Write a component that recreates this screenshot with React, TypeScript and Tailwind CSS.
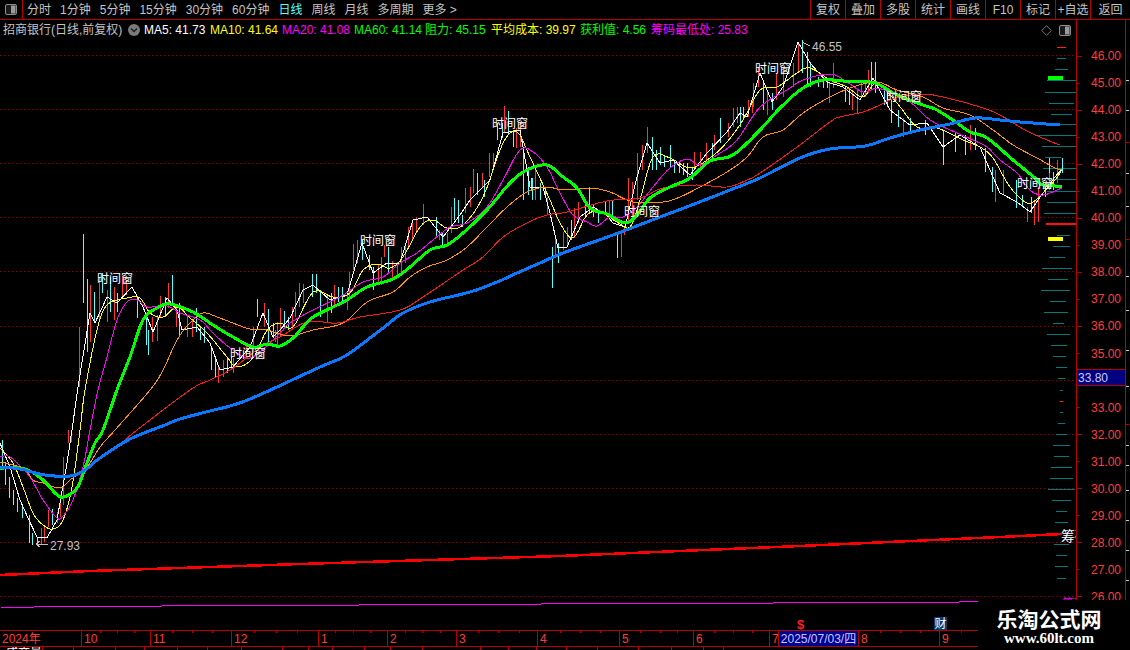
const ma5 = "0,443 10,467 20,500 28,518 37,537 47,538 57,520 67,463 72,430 78,387 90,313 95,323 107,297 117,303 132,287 143,307 153,332 167,298 177,310 182,330 197,327 210,343 220,370 233,367 250,347 263,313 273,337 280,330 290,318 303,290 313,285 330,300 347,295 362,243 373,273 387,263 400,263 413,220 427,217 443,237 460,215 470,200 490,180 503,133 520,130 530,187 543,187 550,213 558,248 567,247 580,217 593,207 607,215 613,223 625,227 637,177 647,143 660,163 673,160 690,175 707,153 727,132 740,113 747,117 760,73 772,102 783,87 798,42 810,63 827,82 843,87 860,100 873,78 890,110 910,125 927,123 943,147 960,135 980,147 990,170 1000,193 1017,202 1030,212 1038,200 1055,177 1062,169";
const ma10 = "0,448 13,463 23,487 33,513 43,525 53,529 63,520 72,487 80,430 85,390 97,330 107,305 127,298 140,298 150,313 163,317 177,307 190,318 207,333 227,357 237,367 253,358 267,330 280,323 293,327 313,292 333,297 350,293 363,270 377,264 390,268 403,257 420,227 433,220 447,228 463,225 483,197 503,143 517,132 530,157 550,200 560,223 573,238 587,215 600,212 617,222 630,227 640,200 653,157 670,158 690,168 710,158 727,142 743,120 760,90 777,87 797,73 810,68 830,80 847,87 863,97 877,83 897,103 917,127 937,128 963,140 980,147 993,158 1010,187 1027,203 1038,198 1055,180 1062,169";
const ma20 = "0,457 8,456 17,463 30,477 43,500 57,518 63,516 73,500 83,467 90,430 98,390 107,357 117,320 127,302 137,300 147,307 167,306 180,313 200,320 213,333 230,348 247,358 260,352 280,333 290,323 313,310 340,297 363,282 383,277 400,263 417,253 433,240 450,227 467,223 487,207 503,180 520,150 533,152 547,167 560,193 573,215 587,222 597,226 610,217 623,217 637,207 653,187 670,168 687,159 700,165 717,155 737,140 760,107 787,90 803,80 830,74 847,82 863,92 877,88 890,93 910,102 930,120 957,133 973,140 987,147 1000,160 1017,173 1030,190 1043,195 1062,188";
const ma60 = "0,468 25,469 43,480 55,493 63,497 77,488 87,463 95,443 103,430 118,387 130,357 143,320 157,308 170,304 193,312 213,325 233,337 253,347 267,344 280,346 293,338 303,327 313,317 333,307 347,300 367,287 393,279 410,267 430,250 447,245 463,233 487,210 510,183 527,170 547,165 563,177 577,188 590,208 607,214 625,223 637,215 650,198 670,187 690,178 710,161 733,155 760,130 780,108 803,88 823,80 843,81 870,82 880,85 897,95 923,105 937,110 957,123 970,132 987,138 1013,160 1035,178 1043,185 1062,186";
const maOrange = "0,462 13,465 25,469 33,480 43,483 60,488 70,480 87,467 100,447 115,430 150,390 163,370 177,340 190,323 203,313 217,317 233,323 250,329 267,330 290,336 313,330 343,323 367,302 393,292 410,277 427,267 447,260 467,247 487,227 507,207 527,192 547,187 563,190 590,188 610,192 633,202 663,202 680,197 700,187 727,172 747,157 763,137 783,130 803,113 830,97 853,87 877,82 897,90 923,97 943,108 970,115 993,130 1013,145 1037,158 1055,168 1062,169";
const maRed = "50,475 57,477 80,473 100,457 117,447 137,430 190,390 210,380 230,370 253,353 267,343 280,337 307,322 337,323 360,317 400,310 423,297 460,272 483,257 503,237 527,223 547,215 567,212 607,201 640,198 663,188 697,185 727,187 747,180 760,173 793,150 830,122 840,117 863,112 880,105 895,98 923,94 947,98 980,107 1000,115 1025,130 1047,140 1060,145";
const maBlue = "0,467 20,469 45,475 70,476 85,470 100,458 130,439 165,425 180,419 210,411 230,406 250,399 277,387 320,367 345,356 370,338 387,325 403,313 430,302 470,292 497,282 517,273 540,263 563,253 613,235 647,222 697,203 730,190 760,178 800,158 830,149 865,146 890,138 920,130 950,124 975,118 1000,120 1020,122 1060,125";

const cyanSticks = "83,234,303 87,279,352 94,292,323 102,273,293 110,277,312 117,293,312 137,298,318 146,313,345 148,330,355 165,297,317 172,275,305 179,303,337 196,308,332 200,327,340 204,327,343 211,347,370 215,357,377 227,357,373 231,357,370 257,299,317 268,309,345 2,440,467 5,462,485 9,477,498 13,490,505 17,498,512 22,507,518 29,515,543 32,533,545 37,537,545 52,509,525 273,323,338 284,311,328 288,317,330 312,274,297 316,274,293 320,290,317 331,293,313 338,287,302 342,287,303 362,240,260 369,255,270 373,267,290 388,247,273 436,217,237 442,232,247 454,198,220 458,200,223 462,215,227 477,173,195 484,180,197 497,123,140 502,123,138 508,111,135 513,130,147 523,148,200 528,167,195 532,178,200 540,183,200 545,187,198 552,247,288 558,243,263 531,178,190 571,220,240 585,203,217 589,188,213 593,205,217 598,213,223 605,202,215 612,200,215 617,232,258 652,137,170 656,150,170 660,147,165 664,155,167 670,145,167 674,160,173 679,162,173 683,163,175 687,163,177 692,167,180 712,143,160 720,118,143 737,107,122 743,107,120 740,107,127 763,82,110 772,93,110 802,40,73 807,52,85 810,62,87 818,77,87 823,77,88 827,78,88 845,87,102 849,88,105 871,62,90 875,62,93 884,87,105 887,88,107 891,100,123 898,110,127 910,118,133 925,120,135 943,130,165 955,132,152 965,135,155 975,128,150 985,148,172 992,167,192 1016,180,208 1022,195,207 1031,197,213 1045,185,197 1049,158,173 1053,172,190 1062,158,173";
const redSticks = "79,327,387 90,285,342 99,277,320 107,290,322 114,287,320 122,277,297 126,280,295 152,317,342 157,315,341 160,296,317 168,283,308 176,307,327 187,315,337 192,320,337 218,365,383 223,360,377 233,358,373 246,343,355 253,327,353 264,303,327 275,330,342 277,322,348 41,528,545 44,527,542 48,510,527 57,512,523 60,502,517 63,457,505 68,430,443 71,430,442 280,308,337 292,307,327 295,292,317 299,283,307 303,284,303 327,295,322 334,285,308 347,293,310 349,272,297 353,244,270 357,240,263 378,265,283 381,257,285 384,245,257 392,261,278 397,262,277 401,247,272 405,243,263 408,227,247 412,220,240 416,217,233 423,204,225 439,230,240 447,233,247 451,207,233 465,188,213 470,187,207 473,169,193 482,173,187 489,153,177 493,153,167 504,106,133 516,128,148 520,123,147 535,168,200 547,197,215 555,235,258 563,232,250 567,227,247 574,208,238 578,202,223 609,200,220 621,232,257 624,227,235 628,178,223 632,182,220 637,153,200 642,145,170 647,127,153 694,152,170 700,152,167 706,143,163 714,135,150 728,123,137 733,108,127 737,107,123 748,100,117 752,100,113 753,83,107 758,67,87 767,90,115 776,73,100 783,70,97 793,63,87 798,43,73 829,83,103 833,63,88 852,90,110 857,90,113 861,82,98 865,82,97 868,70,93 903,118,137 970,125,150 995,170,202 1003,170,195 1027,207,222 1034,200,225 1038,187,222 1049,173,190 1057,160,183";

const chipBars: [number, number, number][] = [
  [58, 1057, 1066], [69, 1055, 1068], [80, 1047, 1076], [92, 1045, 1076], [103, 1049, 1074], [114, 1051, 1072], [124, 1057, 1076],
  [135, 1037, 1076], [146, 1042, 1076], [157, 1045, 1061], [168, 1043, 1076], [179, 1047, 1076], [191, 1047, 1076], [202, 1047, 1076], [213, 1044, 1076],
  [235, 1057, 1070], [246, 1053, 1070], [257, 1049, 1065], [268, 1042, 1072], [279, 1048, 1068], [290, 1041, 1070], [301, 1050, 1066], [312, 1044, 1068], [323, 1053, 1064], [334, 1047, 1070], [345, 1051, 1067], [356, 1053, 1066],
  [367, 1056, 1067], [378, 1058, 1065], [390, 1060, 1063], [412, 1060, 1063], [423, 1058, 1065], [434, 1056, 1067], [445, 1053, 1070], [456, 1054, 1069], [467, 1051, 1072], [478, 1050, 1073], [489, 1048, 1075], [500, 1052, 1071], [511, 1056, 1067], [522, 1055, 1068],
  [544, 1054, 1069], [555, 1056, 1067], [566, 1055, 1068], [578, 1057, 1066],
];
const gridYs = [55, 109, 163, 217, 271, 326, 380, 434, 488, 542, 596];
const windows = [[97, 283], [230, 358], [360, 245], [492, 128], [624, 216], [755, 73], [886, 101], [1017, 188]];
const prices = ["46.00", "45.00", "44.00", "43.00", "42.00", "41.00", "40.00", "39.00", "38.00", "37.00", "36.00", "35.00", "", "33.00", "32.00", "31.00", "30.00", "29.00", "28.00", "27.00", "26.00"];

const periods = ["1分钟", "5分钟", "15分钟", "30分钟", "60分钟"];
const tools = ["复权", "叠加", "多股", "统计", "画线", "F10", "标记", "+自选"];
const months: [string, number][] = [["2024年", 82], ["10", 69], ["11", 81], ["12", 87], ["1", 69], ["2", 69], ["3", 81], ["4", 82], ["5", 74], ["6", 76], ["7", 9]];
const minorTicks = [100, 117, 134, 172, 192, 212, 254, 276, 297, 335, 353, 370, 405, 422, 440, 478, 498, 519, 560, 580, 600, 640, 660, 677, 714, 733, 752, 880, 900, 920, 961];
const bottomCells = [43, 31, 42, 29, 33, 30, 34, 41, 26, 24, 32, 26, 32, 58, 28, 28, 30, 31, 41, 33, 32, 20];
const legend: [string, string, number][] = [
  ["MA5: 41.73", "text-white", 66],
  ["MA10: 41.64", "text-[#ffff00]", 72],
  ["MA20: 41.08", "text-[#ff00ff]", 72],
  ["MA60: 41.14", "text-[#00ff00]", 71],
  ["阻力: 45.15", "text-[#00ff00]", 66],
  ["平均成本: 39.97", "text-[#ffff00]", 89],
  ["获利值: 4.56", "text-[#00ff00]", 71],
  ["筹码最低处: 25.83", "text-[#ff00ff]", 100],
];

// catmull-rom through the traced points, the averages are smooth curves
function smooth(data: string) {
  const p = data.split(" ").map((s) => s.split(",").map(Number));
  const out: string[] = [];
  for (let i = 0; i < p.length - 1; i++) {
    const a = p[Math.max(i - 1, 0)];
    const b = p[i];
    const c = p[i + 1];
    const d = p[Math.min(i + 2, p.length - 1)];
    for (let k = 0; k < 5; k++) {
      const t = k / 5;
      const f = (n: number) =>
        0.5 * (2 * b[n] + (c[n] - a[n]) * t + (2 * a[n] - 5 * b[n] + 4 * c[n] - d[n]) * t * t + (3 * b[n] - a[n] - 3 * c[n] + d[n]) * t * t * t);
      out.push(f(0).toFixed(1) + "," + f(1).toFixed(1));
    }
  }
  out.push(p[p.length - 1].join(","));
  return out.join(" ");
}

function sticks(data: string, color: string) {
  return data.split(" ").map((s) => {
    const [x, y1, y2] = s.split(",");
    return <line key={s} x1={Number(x) + 0.5} x2={Number(x) + 0.5} y1={y1} y2={y2} stroke={color} strokeWidth={1} />;
  });
}

function PanelIcon() {
  return (
    <svg width="12" height="11" viewBox="0 0 12 11">
      <rect x="0.5" y="0.5" width="11" height="10" rx="1.5" fill="#1a1a1a" stroke="#8c8c8c" />
      <rect x="6" y="1.5" width="4.5" height="8" fill="#9a9a9a" />
    </svg>
  );
}

export default function App() {
  return (
    <div className="relative w-[1130px] h-[650px] overflow-hidden bg-black text-[12px] leading-none text-[#c4c4c4] font-['Liberation_Sans','Noto_Sans_CJK_SC',sans-serif]">
      {/* top bar */}
      <div className="flex h-[20px] border-b border-[#b80000]">
        <div className="flex w-[23px] items-center justify-center border-r border-[#b80000] pb-px">
          <PanelIcon />
        </div>
        <div className="ml-[4px] flex items-center gap-[9px]">
          <span>分时</span>
          {periods.map((p) => (
            <span key={p}>{p}</span>
          ))}
          <span className="text-[#55ffff]">日线</span>
          <span>周线</span>
          <span>月线</span>
          <span>多周期</span>
          <span>更多 &gt;</span>
        </div>
        <div className="ml-auto flex">
          {tools.map((t) => (
            <div key={t} className="flex w-[35px] items-center justify-center border-l border-[#b80000]">
              {t}
            </div>
          ))}
          <div className="flex w-[40px] items-center justify-center border-l border-[#b80000]">返回</div>
        </div>
      </div>

      <div className="flex h-[610px]">
        <div className="w-[1076px]">
          {/* legend */}
          <div className="flex h-[20px] items-center pl-[3px]">
            <span className="w-[125px] whitespace-nowrap">招商银行(日线,前复权)</span>
            <span className="flex h-[12px] w-[12px] items-center justify-center rounded-full bg-[#7a7a7a]">
              <svg width="8" height="6" viewBox="0 0 8 6">
                <path d="M1 1.5 L4 4.5 L7 1.5" fill="none" stroke="#1c1c1c" strokeWidth="1.4" />
              </svg>
            </span>
            <div className="ml-[4px] flex whitespace-nowrap">
              {legend.map(([t, c, w]) => (
                <span key={t} className={c} style={{ width: w }}>
                  {t}
                </span>
              ))}
            </div>
            <div className="ml-auto mr-[5px] flex items-center gap-[7px]">
              <svg width="11" height="11" viewBox="0 0 11 11">
                <path d="M5.5 0.7 L10.3 5.5 L5.5 10.3 L0.7 5.5 Z" fill="none" stroke="#7a7a7a" />
              </svg>
              <PanelIcon />
            </div>
          </div>

          {/* kline chart */}
          <svg className="block" width="1076" height="590" viewBox="0 40 1076 590" shapeRendering="crispEdges">
            {gridYs.map((y) => (
              <line key={y} x1="0" x2="1076" y1={y + 0.5} y2={y + 0.5} stroke="#8c0000" strokeDasharray="1 3" />
            ))}
            {chipBars.map(([y, x1, x2]) => (
              <line key={y} x1={x1} x2={x2} y1={y + 0.5} y2={y + 0.5} stroke="#007a7a" />
            ))}
            <line x1="1057" x2="1066" y1="47.5" y2="47.5" stroke="#ff2020" />
            <line x1="1060" x2="1063" y1="401.5" y2="401.5" stroke="#ff2020" />
            <line x1="1046" x2="1076" y1="224" y2="224" stroke="#ff1010" strokeWidth="2" />
            <rect x="1048" y="76" width="15" height="4" fill="#00ff00" />
            <rect x="1048" y="237" width="15" height="4" fill="#ffff00" />
            {sticks(cyanSticks, "#55ffff")}
            {sticks(redSticks, "#ff3535")}
            <polyline points={ma5} fill="none" stroke="#ffffff" strokeWidth="1" />
            <polyline points={smooth(ma10)} fill="none" stroke="#ffff00" strokeWidth="1" />
            <polyline points={smooth(ma20)} fill="none" stroke="#ff00ff" strokeWidth="1" />
            <polyline points={smooth(maOrange)} fill="none" stroke="#ff9010" strokeWidth="1" />
            <polyline points={smooth(maRed)} fill="none" stroke="#ff1818" strokeWidth="1" />
            <polyline points={smooth(ma60)} fill="none" stroke="#00ff00" strokeWidth="3" />
            <polyline points={smooth(maBlue)} fill="none" stroke="#0a78ff" strokeWidth="3" />
            <polyline points="0,575 90,571 300,564 560,556 800,546 1000,537 1062,534" fill="none" stroke="#ff0000" strokeWidth="2.5" />
            <path d="M802 42 L810 46 M36 544 L48 545 M36 544 L40 541 M36 544 L40 547" fill="none" stroke="#c0c0c0" />
            <text x="812" y="51" fill="#c0c0c0" fontSize="12">46.55</text>
            <text x="50" y="550" fill="#c0c0c0" fontSize="12">27.93</text>
            {windows.map(([x, y]) => (
              <text key={x} x={x} y={y} fill="#ffffff" fontSize="12">时间窗</text>
            ))}
            <text x="1061" y="541" fill="#ffffff" fontSize="14">筹码</text>
            <text x="1062" y="608" fill="#ff00ff" fontSize="12">筹码</text>
            <path d="M1 607.5 H34 M34 606.5 H162 M162 605.5 H359 M359 604.5 H541 M541 603.5 H773 M773 602.5 H959 M959 601.5 H978" fill="none" stroke="#ff00ff" />
            <rect x="934" y="617" width="13" height="12.5" fill="#0a3a70" />
            <text x="934.5" y="628" fill="#ffffff" fontSize="12">财</text>
            <text x="797" y="629" fill="#ff2020" fontSize="13" fontWeight="700">$</text>
          </svg>
        </div>

        {/* price axis */}
        <div className="relative w-[50px] border-x border-[#b80000] pt-[22.5px] text-[#ff3c3c]">
          {prices.map((p, i) => (
            <div key={i} className="flex h-[27.05px] items-center justify-between pr-[4px]">
              <span className={i % 2 === 0 ? "h-px w-[5px] bg-[#b80000]" : "h-px w-[2px] bg-[#b80000]"} />
              <span>{p}</span>
            </div>
          ))}
          <div className="absolute inset-x-0 top-[349px] flex h-[17px] items-center border-y border-[#b80000] bg-[#000080] pl-px text-[#c8c8ff]">
            33.80
          </div>
        </div>
        <svg className="block" width="3" height="610" viewBox="0 0 3 610" shapeRendering="crispEdges">
          <path d="M0 122 H3 M0 219 H3 M0 404 H3" stroke="#b80000" />
          <path d="M0 60 H3 M0 90 H3 M0 153 H3 M0 186 H3 M0 256 H3 M0 290 H3 M0 330 H3 M0 366 H3 M0 425 H3 M0 445 H3 M0 470 H3 M0 500 H3 M0 530 H3 M0 560 H3" stroke="#c8c8c8" />
        </svg>
      </div>

      {/* time axis */}
      <div className="relative flex h-[17px] items-center border-y border-[#b80000] text-[#ff3c3c]">
        {months.map(([m, w]) => (
          <div key={m} className="flex h-full items-center border-r border-[#b80000] pl-[2px]" style={{ width: w }}>
            {m}
          </div>
        ))}
        <div className="flex h-full w-[80px] items-center border-r border-[#b80000] pl-px">
          <span className="flex h-full w-[77px] items-center justify-center bg-[#000090] text-[#c8c8ff]">2025/07/03/四</span>
        </div>
        <div className="flex h-full w-[81px] items-center border-r border-[#b80000] pl-[2px]">8</div>
        <div className="flex h-full w-[100px] items-center pl-[2px]">9</div>
        {minorTicks.map((x) => (
          <span key={x} className="absolute top-0 h-[2px] w-px bg-[#b80000]" style={{ left: x }} />
        ))}
      </div>

      {/* next panel, cut off by the window */}
      <div className="flex h-[3px] overflow-hidden">
        {bottomCells.map((w, i) => (
          <div key={i} className="h-[12px] shrink-0 border-r border-[#b80000] pl-[6px] text-white" style={{ width: w }}>
            {i === 0 ? "成交量" : ""}
          </div>
        ))}
      </div>

      {/* watermark */}
      <div className="absolute bottom-0 right-0 flex h-[50px] w-[152px] flex-col items-center bg-black pr-[10px] pt-[7px]">
        <span className="text-[21px] font-bold leading-[22px] text-white font-['Noto_Sans_CJK_SC',sans-serif]">乐淘公式网</span>
        <span className="mt-[1px] text-[15px] font-bold leading-[16px] text-white font-['Liberation_Serif',serif]">www.60lt.com</span>
      </div>
    </div>
  );
}
